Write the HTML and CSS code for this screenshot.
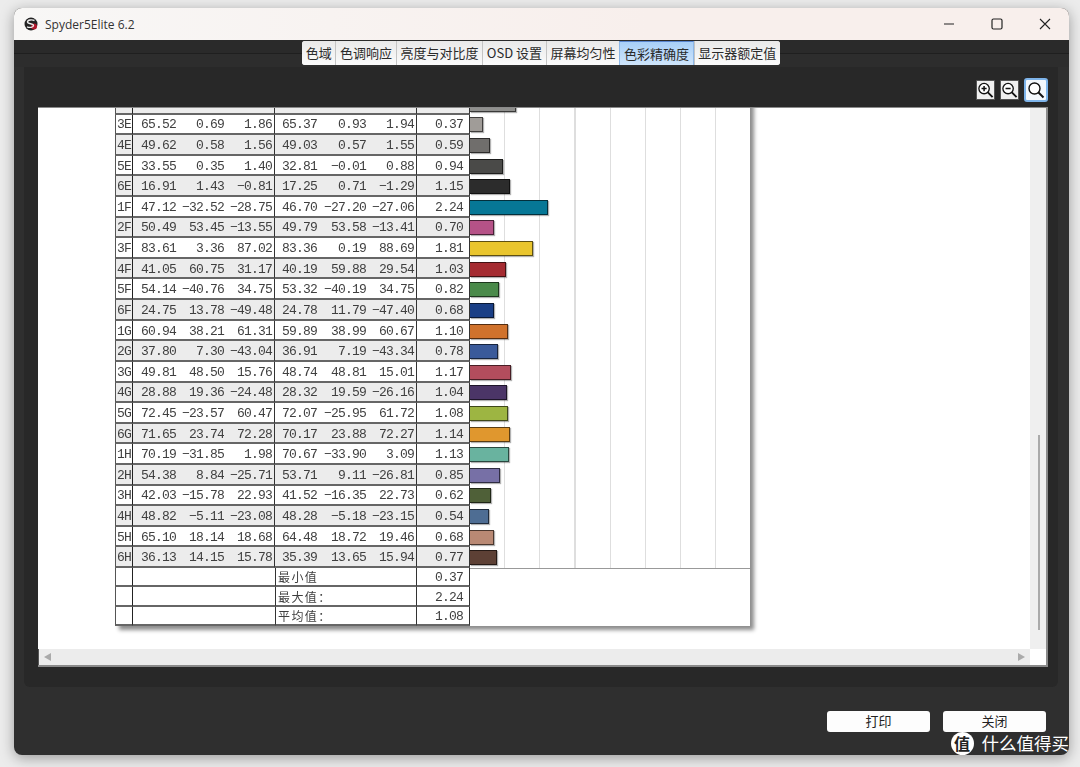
FILE: index.html
```html
<!DOCTYPE html>
<html lang="en">
<head>
    <meta charset="UTF-8">
    <meta name="viewport" content="width=device-width, initial-scale=1.0">
    <title>Spyder5Elite 6.2</title>
    <link rel="stylesheet" href="styles.css">
</head>
<body>
    <div class="window">
        <div class="titlebar">
            <svg class="app-icon" width="14" height="14" viewBox="0 0 14 14">
                <circle cx="7" cy="7" r="6.5" fill="#222"/>
                <circle cx="10" cy="9.5" r="3" fill="#b0182c"/>
                <path d="M10.5 3.5C8 2.4 3.5 2.8 3.5 5C3.5 7.4 9.5 6.2 9.5 8.6C9.5 10.6 5.5 10.8 3 9.8" fill="none" stroke="#eee" stroke-width="1.4"/>
            </svg>
            <span class="app-title">Spyder5Elite 6.2</span>
            <div class="win-controls">
                <svg width="12" height="12" viewBox="0 0 12 12"><path d="M1 6h10" stroke="#222" stroke-width="1.2"/></svg>
                <svg width="12" height="12" viewBox="0 0 12 12"><rect x="1" y="1" width="10" height="10" rx="1.5" fill="none" stroke="#222" stroke-width="1.2"/></svg>
                <svg width="12" height="12" viewBox="0 0 12 12"><path d="M1 1l10 10M11 1L1 11" stroke="#222" stroke-width="1.1"/></svg>
            </div>
        </div>

        <div class="tabarea">
            <div class="tabs">
                <div class="tab">色域</div>
                <div class="tab">色调响应</div>
                <div class="tab">亮度与对比度</div>
                <div class="tab">OSD 设置</div>
                <div class="tab">屏幕均匀性</div>
                <div class="tab active">色彩精确度</div>
                <div class="tab">显示器额定值</div>
            </div>
        </div>

        <div class="panel">
            <div class="zoombar">
                <button class="zoom-btn">
                    <svg width="18" height="18" viewBox="0 0 18 18"><circle cx="7.5" cy="7.5" r="5.5" fill="#fff" stroke="#111" stroke-width="1.4"/><path d="M11.5 11.5l5 5" stroke="#111" stroke-width="2"/><path d="M4.8 7.5h5.4M7.5 4.8v5.4" stroke="#111" stroke-width="1.6"/></svg>
                </button>
                <button class="zoom-btn">
                    <svg width="18" height="18" viewBox="0 0 18 18"><circle cx="7.5" cy="7.5" r="5.5" fill="#fff" stroke="#111" stroke-width="1.4"/><path d="M11.5 11.5l5 5" stroke="#111" stroke-width="2"/><path d="M4.8 7.5h5.4" stroke="#111" stroke-width="1.6"/></svg>
                </button>
                <button class="zoom-btn current">
                    <svg width="18" height="18" viewBox="0 0 18 18"><circle cx="7.5" cy="7.5" r="5.5" fill="#fff" stroke="#111" stroke-width="1.4"/><path d="M11.5 11.5l5 5" stroke="#111" stroke-width="2"/></svg>
                </button>
            </div>

            <div class="viewer">
                <div class="canvas">
                    <div class="sheet">
                        <div class="row alt"><span class="id">2E</span><span class="v1">80.81</span><span class="v2">1.17</span><span class="v3">2.03</span><span class="v4">81.00</span><span class="v5">0.91</span><span class="v6">2.70</span><span class="de">1.31</span><span class="chart"><i class="bar" style="width:46px;background:#8f8f8d"></i></span></div>
                        <div class="row"><span class="id">3E</span><span class="v1">65.52</span><span class="v2">0.69</span><span class="v3">1.86</span><span class="v4">65.37</span><span class="v5">0.93</span><span class="v6">1.94</span><span class="de">0.37</span><span class="chart"><i class="bar" style="width:13px;background:#a09c98"></i></span></div>
                        <div class="row alt"><span class="id">4E</span><span class="v1">49.62</span><span class="v2">0.58</span><span class="v3">1.56</span><span class="v4">49.03</span><span class="v5">0.57</span><span class="v6">1.55</span><span class="de">0.59</span><span class="chart"><i class="bar" style="width:20px;background:#706e6c"></i></span></div>
                        <div class="row"><span class="id">5E</span><span class="v1">33.55</span><span class="v2">0.35</span><span class="v3">1.40</span><span class="v4">32.81</span><span class="v5">−0.01</span><span class="v6">0.88</span><span class="de">0.94</span><span class="chart"><i class="bar" style="width:33px;background:#4a4a48"></i></span></div>
                        <div class="row alt"><span class="id">6E</span><span class="v1">16.91</span><span class="v2">1.43</span><span class="v3">−0.81</span><span class="v4">17.25</span><span class="v5">0.71</span><span class="v6">−1.29</span><span class="de">1.15</span><span class="chart"><i class="bar" style="width:40px;background:#2c2c2c"></i></span></div>
                        <div class="row"><span class="id">1F</span><span class="v1">47.12</span><span class="v2">−32.52</span><span class="v3">−28.75</span><span class="v4">46.70</span><span class="v5">−27.20</span><span class="v6">−27.06</span><span class="de">2.24</span><span class="chart"><i class="bar" style="width:78px;background:#067796"></i></span></div>
                        <div class="row alt"><span class="id">2F</span><span class="v1">50.49</span><span class="v2">53.45</span><span class="v3">−13.55</span><span class="v4">49.79</span><span class="v5">53.58</span><span class="v6">−13.41</span><span class="de">0.70</span><span class="chart"><i class="bar" style="width:24px;background:#b55287"></i></span></div>
                        <div class="row"><span class="id">3F</span><span class="v1">83.61</span><span class="v2">3.36</span><span class="v3">87.02</span><span class="v4">83.36</span><span class="v5">0.19</span><span class="v6">88.69</span><span class="de">1.81</span><span class="chart"><i class="bar" style="width:63px;background:#e9c52e"></i></span></div>
                        <div class="row alt"><span class="id">4F</span><span class="v1">41.05</span><span class="v2">60.75</span><span class="v3">31.17</span><span class="v4">40.19</span><span class="v5">59.88</span><span class="v6">29.54</span><span class="de">1.03</span><span class="chart"><i class="bar" style="width:36px;background:#a52b31"></i></span></div>
                        <div class="row"><span class="id">5F</span><span class="v1">54.14</span><span class="v2">−40.76</span><span class="v3">34.75</span><span class="v4">53.32</span><span class="v5">−40.19</span><span class="v6">34.75</span><span class="de">0.82</span><span class="chart"><i class="bar" style="width:29px;background:#4a8a4a"></i></span></div>
                        <div class="row alt"><span class="id">6F</span><span class="v1">24.75</span><span class="v2">13.78</span><span class="v3">−49.48</span><span class="v4">24.78</span><span class="v5">11.79</span><span class="v6">−47.40</span><span class="de">0.68</span><span class="chart"><i class="bar" style="width:24px;background:#1a3f86"></i></span></div>
                        <div class="row"><span class="id">1G</span><span class="v1">60.94</span><span class="v2">38.21</span><span class="v3">61.31</span><span class="v4">59.89</span><span class="v5">38.99</span><span class="v6">60.67</span><span class="de">1.10</span><span class="chart"><i class="bar" style="width:38px;background:#d0722c"></i></span></div>
                        <div class="row alt"><span class="id">2G</span><span class="v1">37.80</span><span class="v2">7.30</span><span class="v3">−43.04</span><span class="v4">36.91</span><span class="v5">7.19</span><span class="v6">−43.34</span><span class="de">0.78</span><span class="chart"><i class="bar" style="width:28px;background:#3a5a9a"></i></span></div>
                        <div class="row"><span class="id">3G</span><span class="v1">49.81</span><span class="v2">48.50</span><span class="v3">15.76</span><span class="v4">48.74</span><span class="v5">48.81</span><span class="v6">15.01</span><span class="de">1.17</span><span class="chart"><i class="bar" style="width:41px;background:#b34d5d"></i></span></div>
                        <div class="row alt"><span class="id">4G</span><span class="v1">28.88</span><span class="v2">19.36</span><span class="v3">−24.48</span><span class="v4">28.32</span><span class="v5">19.59</span><span class="v6">−26.16</span><span class="de">1.04</span><span class="chart"><i class="bar" style="width:37px;background:#4b3567"></i></span></div>
                        <div class="row"><span class="id">5G</span><span class="v1">72.45</span><span class="v2">−23.57</span><span class="v3">60.47</span><span class="v4">72.07</span><span class="v5">−25.95</span><span class="v6">61.72</span><span class="de">1.08</span><span class="chart"><i class="bar" style="width:38px;background:#9db542"></i></span></div>
                        <div class="row alt"><span class="id">6G</span><span class="v1">71.65</span><span class="v2">23.74</span><span class="v3">72.28</span><span class="v4">70.17</span><span class="v5">23.88</span><span class="v6">72.27</span><span class="de">1.14</span><span class="chart"><i class="bar" style="width:40px;background:#e0972e"></i></span></div>
                        <div class="row"><span class="id">1H</span><span class="v1">70.19</span><span class="v2">−31.85</span><span class="v3">1.98</span><span class="v4">70.67</span><span class="v5">−33.90</span><span class="v6">3.09</span><span class="de">1.13</span><span class="chart"><i class="bar" style="width:39px;background:#69b39f"></i></span></div>
                        <div class="row alt"><span class="id">2H</span><span class="v1">54.38</span><span class="v2">8.84</span><span class="v3">−25.71</span><span class="v4">53.71</span><span class="v5">9.11</span><span class="v6">−26.81</span><span class="de">0.85</span><span class="chart"><i class="bar" style="width:30px;background:#7770a6"></i></span></div>
                        <div class="row"><span class="id">3H</span><span class="v1">42.03</span><span class="v2">−15.78</span><span class="v3">22.93</span><span class="v4">41.52</span><span class="v5">−16.35</span><span class="v6">22.73</span><span class="de">0.62</span><span class="chart"><i class="bar" style="width:21px;background:#4f6038"></i></span></div>
                        <div class="row alt"><span class="id">4H</span><span class="v1">48.82</span><span class="v2">−5.11</span><span class="v3">−23.08</span><span class="v4">48.28</span><span class="v5">−5.18</span><span class="v6">−23.15</span><span class="de">0.54</span><span class="chart"><i class="bar" style="width:19px;background:#4e6d93"></i></span></div>
                        <div class="row"><span class="id">5H</span><span class="v1">65.10</span><span class="v2">18.14</span><span class="v3">18.68</span><span class="v4">64.48</span><span class="v5">18.72</span><span class="v6">19.46</span><span class="de">0.68</span><span class="chart"><i class="bar" style="width:24px;background:#b98974"></i></span></div>
                        <div class="row alt"><span class="id">6H</span><span class="v1">36.13</span><span class="v2">14.15</span><span class="v3">15.78</span><span class="v4">35.39</span><span class="v5">13.65</span><span class="v6">15.94</span><span class="de">0.77</span><span class="chart"><i class="bar" style="width:27px;background:#5d4035"></i></span></div>

                        <div class="sum-row"><span class="id"></span><span class="blank"></span><span class="label">最小值</span><span class="de">0.37</span><span class="sum-rest"></span></div>
                        <div class="sum-row"><span class="id"></span><span class="blank"></span><span class="label">最大值：</span><span class="de">2.24</span><span class="sum-rest"></span></div>
                        <div class="sum-row"><span class="id"></span><span class="blank"></span><span class="label">平均值：</span><span class="de">1.08</span><span class="sum-rest"></span></div>
                    </div>
                </div>
                <div class="vscroll"><div class="vthumb"></div></div>
                <div class="hscroll">
                    <i class="arrow-left"></i>
                    <i class="arrow-right"></i>
                </div>
                <div class="corner"></div>
            </div>
        </div>

        <div class="footer">
            <button class="action">打印</button>
            <button class="action">关闭</button>
        </div>

        <div class="watermark">
            <span class="wm-badge">值</span>
            <span class="wm-text">什么值得买</span>
        </div>
    </div>
</body>
</html>
```

FILE: styles.css
```css
* {
    box-sizing: border-box;
}
body {
    margin: 0;
    padding: 8px 11px 12px 14px;
    height: 767px;
    overflow: hidden;
    background: #ececec;
    font-family: "Noto Sans CJK SC", "Noto Sans", sans-serif;
}
.window {
    position: relative;
    height: 747px;
    display: flex;
    flex-direction: column;
    background: #2f2f2f;
    border-radius: 8px;
    overflow: hidden;
    box-shadow: 0 3px 14px rgba(0, 0, 0, 0.35);
}

/* title bar */
.titlebar {
    height: 32px;
    flex: none;
    display: flex;
    align-items: center;
    padding-left: 10px;
    background: linear-gradient(90deg, #f8f7f6, #f8efec 60%);
}
.app-title {
    margin-left: 7px;
    font-family: "Open Sans", sans-serif;
    font-size: 12px;
    color: #333;
}
.win-controls {
    margin-left: auto;
    display: flex;
    gap: 36px;
    padding-right: 18px;
}

/* tabs */
.tabarea {
    height: 27px;
    flex: none;
    padding: 1px 0 0 288px;
    background: linear-gradient(#2a2a2a 0 13px, #1f1f1f 13px 14px, #2d2d2d 14px);
}
.tabs {
    display: flex;
    width: fit-content;
    height: 24px;
    border-radius: 3px;
    overflow: hidden;
    background: #f4f4f4;
}
.tab {
    padding: 0 3.7px 1px;
    display: flex;
    align-items: center;
    font-size: 13px;
    color: #2a2a2a;
    background: linear-gradient(#e9e9e9, #fbfbfb);
    border-left: 1px solid #c4c4c4;
}
.tab:first-child {
    border-left: none;
}
.tab.active {
    background: linear-gradient(#a8cff8, #cfe5fb);
    border-top: 1px solid #5a86d0;
    border-left: 1px solid #8db8e8;
    border-right: 1px solid #8db8e8;
}

/* dark panel with the report */
.panel {
    height: 620px;
    flex: none;
    margin: 0 11px 0 10px;
    background: #282828;
    border-radius: 0 0 6px 6px;
}
.zoombar {
    height: 40px;
    display: flex;
    align-items: center;
    justify-content: flex-end;
    gap: 5px;
    padding: 5px 10px 0 0;
}
.zoom-btn {
    width: 19px;
    height: 20px;
    padding: 0;
    display: flex;
    align-items: center;
    justify-content: center;
    background: #f0f0f0;
    border: 1px solid #555;
    border-radius: 1px;
}
.zoom-btn.current {
    width: 24px;
    height: 24px;
    background: #f4f8fc;
    border: 2px solid #7eb4ea;
    border-radius: 3px;
}
.viewer {
    height: 560px;
    margin: 0 10px 0 14px;
    display: grid;
    grid-template-columns: 1fr 16px;
    grid-template-rows: 1fr 16px;
    background: #fff;
    border-top: 1px solid #8a8a8a;
    border-right: 2px solid #8a8a8a;
    border-bottom: 2px solid #8a8a8a;
}
.canvas {
    overflow: hidden;
    min-height: 0;
}

/* the sheet */
.sheet {
    width: 635px;
    margin: -14px 0 0 77px;
    background: #fff;
    box-shadow: 4px 4px 4px rgba(0, 0, 0, 0.45);
    font-family: "Liberation Mono", monospace;
    font-size: 13px;
    letter-spacing: -0.8px;
    color: #3f3f3f;
    filter: blur(0.4px);
}
.row, .sum-row {
    display: grid;
    align-items: stretch;
}
.row {
    height: 20.62px;
    grid-template-columns: 18px 43px 48px 51px 42px 49px 51px 53px 280px;
}
.sum-row {
    height: 19.4px;
    grid-template-columns: 18px 142px 142px 53px 280px;
}
.row > span, .sum-row > span {
    display: flex;
    align-items: center;
    justify-content: flex-end;
    border-bottom: 2px solid #666;
}
.row > span:not(.chart), .sum-row > .de {
    padding-top: 2px;
}
.row.alt > span {
    background-color: #ececec;
}
.id {
    justify-content: center !important;
    border-left: 1px solid #555;
    border-right: 1px solid #222;
    white-space: nowrap;
}
.v3 {
    padding-right: 2px;
    border-right: 1px solid #333;
}
.v6 {
    padding-right: 2px;
    border-right: 1px solid #333;
}
.de {
    padding-right: 6px;
    border-right: 1px solid #333;
}
.row > .chart {
    justify-content: flex-start;
    border-bottom: none;
    background: repeating-linear-gradient(90deg, #fff 0 34px, #dedede 34px 35.2px);
}
.row.alt > .chart {
    background: repeating-linear-gradient(90deg, #fff 0 34px, #dedede 34px 35.2px);
}
.bar {
    display: block;
    height: 15px;
    border: 1px solid rgba(0, 0, 0, 0.6);
    border-left: none;
    box-shadow: 1px 1px 1px rgba(0, 0, 0, 0.3);
}
.label {
    justify-content: flex-start !important;
    padding-left: 2px;
    font-family: "Noto Sans CJK SC", sans-serif;
    font-size: 12px;
    letter-spacing: 1.4px;
    border-left: 1px solid #333;
    border-right: 1px solid #333;
}
.sum-row > .sum-rest {
    border-bottom: none;
}
.row + .sum-row > .sum-rest {
    border-top: 1px solid #999;
}

/* scrollbars */
.vscroll {
    grid-row: 1;
    grid-column: 2;
    position: relative;
    background: #efefef;
}
.vthumb {
    position: absolute;
    left: 8px;
    top: 327px;
    width: 1.5px;
    height: 195px;
    background: #aaa;
}
.hscroll {
    grid-row: 2;
    grid-column: 1;
    display: flex;
    justify-content: space-between;
    align-items: center;
    padding: 0 5px 0 5px;
    background: #ececec;
    border-left: 1px solid #555;
}
.arrow-left, .arrow-right {
    width: 0;
    height: 0;
    border-top: 4.5px solid transparent;
    border-bottom: 4.5px solid transparent;
}
.arrow-left {
    border-right: 7px solid #aaa;
}
.arrow-right {
    border-left: 7px solid #aaa;
}
.corner {
    grid-row: 2;
    grid-column: 2;
    background: #fff;
}

/* bottom buttons */
.footer {
    display: flex;
    justify-content: flex-end;
    gap: 13px;
    padding: 24px 23px 0 0;
}
.action {
    width: 103px;
    height: 21px;
    padding: 0 0 2px;
    background: #fdfdfd;
    border: none;
    border-radius: 3px;
    font-family: "Noto Sans CJK SC", sans-serif;
    font-size: 13px;
    line-height: 17px;
    color: #222;
}

/* site mark stamped on the corner */
.watermark {
    position: absolute;
    right: 0;
    bottom: 0;
    display: flex;
    align-items: center;
    gap: 8px;
    height: 24px;
}
.wm-badge {
    width: 23px;
    height: 23px;
    display: flex;
    align-items: center;
    justify-content: center;
    background: #fff;
    border-radius: 50%;
    font-size: 16px;
    font-weight: 700;
    color: #222;
}
.wm-text {
    font-size: 17.5px;
    line-height: 24px;
    color: #fff;
}
```
